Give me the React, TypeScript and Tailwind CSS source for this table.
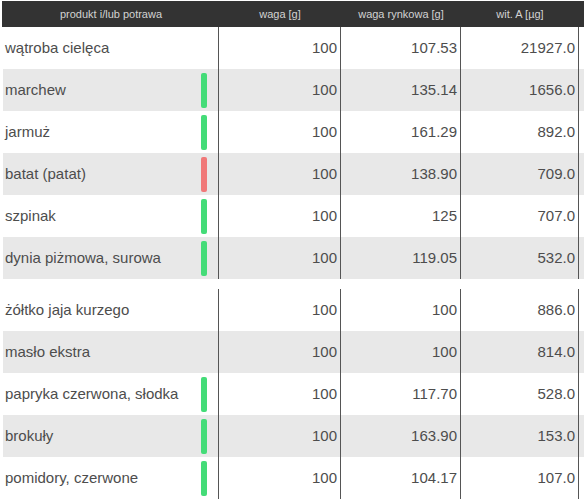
import React from 'react';

type Row = { name: string; waga: string; rynkowa: string; witA: string; mark?: 'green' | 'red' };

const GROUPS: Row[][] = [
  [
    { name: 'wątroba cielęca', waga: '100', rynkowa: '107.53', witA: '21927.0' },
    { name: 'marchew', waga: '100', rynkowa: '135.14', witA: '1656.0', mark: 'green' },
    { name: 'jarmuż', waga: '100', rynkowa: '161.29', witA: '892.0', mark: 'green' },
    { name: 'batat (patat)', waga: '100', rynkowa: '138.90', witA: '709.0', mark: 'red' },
    { name: 'szpinak', waga: '100', rynkowa: '125', witA: '707.0', mark: 'green' },
    { name: 'dynia piżmowa, surowa', waga: '100', rynkowa: '119.05', witA: '532.0', mark: 'green' },
  ],
  [
    { name: 'żółtko jaja kurzego', waga: '100', rynkowa: '100', witA: '886.0' },
    { name: 'masło ekstra', waga: '100', rynkowa: '100', witA: '814.0' },
    { name: 'papryka czerwona, słodka', waga: '100', rynkowa: '117.70', witA: '528.0', mark: 'green' },
    { name: 'brokuły', waga: '100', rynkowa: '163.90', witA: '153.0', mark: 'green' },
    { name: 'pomidory, czerwone', waga: '100', rynkowa: '104.17', witA: '107.0', mark: 'green' },
  ],
];

const COLS = 'grid grid-cols-[216px_122px_120px_118px]';

export default function App() {
  return (
    <div
      className="w-[584px] h-[504px] bg-white pt-[1px] pl-[3px] overflow-hidden"
      style={{ fontFamily: '"Liberation Sans", Arial, sans-serif' }}
    >
      {/* nagłówek */}
      <div className={`${COLS} h-[26px] bg-[#333333] text-[11px] text-[#d2d2d2] items-center -ml-[1px] pl-[1px]`}>
        <div className="text-center">produkt i/lub potrawa</div>
        <div className="text-center">waga [g]</div>
        <div className="text-center">waga rynkowa [g]</div>
        <div className="text-center">wit. A [µg]</div>
      </div>

      {GROUPS.map((rows, gi) => (
        <div key={gi} className={gi > 0 ? 'mt-[10px]' : ''}>
          {rows.map((r, i) => (
            <div
              key={r.name}
              className={`${COLS} h-[42px] text-[15px] text-[#4d4d4d] ${i % 2 === 1 ? 'bg-[#e8e8e8]' : ''}`}
            >
              <div className="flex items-center justify-between pl-[2px] pr-[11px] border-r-[1.5px] border-[#555555]">
                <span>{r.name}</span>
                {r.mark && (
                  <span
                    className={`w-[6px] h-[35px] rounded-[2px] ${
                      r.mark === 'green' ? 'bg-[#44dc78]' : 'bg-[#f07878]'
                    }`}
                  />
                )}
              </div>
              <div className="flex items-center justify-end pr-[3px] border-r-[1.5px] border-[#555555]">{r.waga}</div>
              <div className="flex items-center justify-end pr-[3px] border-r-[1.5px] border-[#555555]">{r.rynkowa}</div>
              <div className="flex items-center justify-end pr-[3px] border-r-[1.5px] border-[#555555]">{r.witA}</div>
            </div>
          ))}
        </div>
      ))}
    </div>
  );
}
